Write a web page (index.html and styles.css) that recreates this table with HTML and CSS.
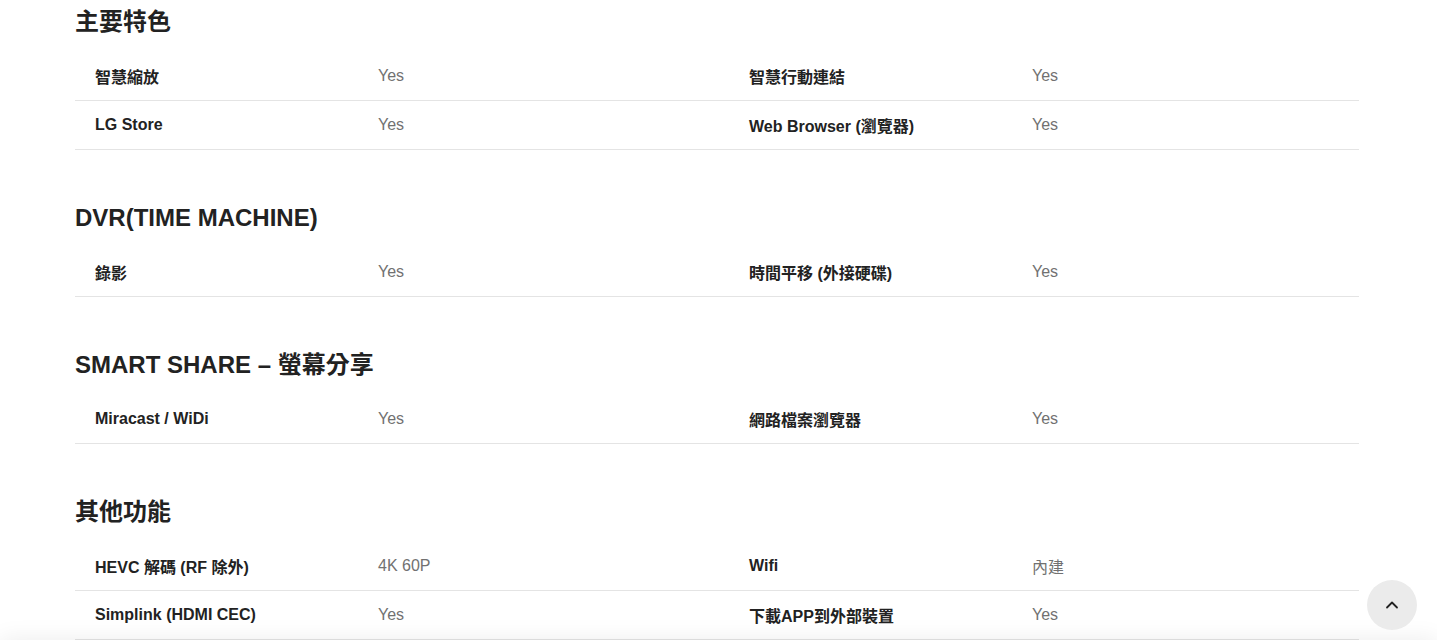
FILE: index.html
```html
<!DOCTYPE html>
<html lang="zh-Hant">
<head>
<meta charset="utf-8">
<title>規格</title>
<link rel="stylesheet" href="styles.css">
</head>
<body>
<main class="specs">
  <section class="spec-section">
    <h2 class="spec-title">主要特色</h2>
    <div class="spec-row">
      <div class="spec-label">智慧縮放</div><div class="spec-value">Yes</div>
      <div class="spec-label">智慧行動連結</div><div class="spec-value">Yes</div>
    </div>
    <div class="spec-row">
      <div class="spec-label">LG Store</div><div class="spec-value">Yes</div>
      <div class="spec-label">Web Browser (瀏覽器)</div><div class="spec-value">Yes</div>
    </div>
  </section>
  <section class="spec-section">
    <h2 class="spec-title">DVR(TIME MACHINE)</h2>
    <div class="spec-row">
      <div class="spec-label">錄影</div><div class="spec-value">Yes</div>
      <div class="spec-label">時間平移 (外接硬碟)</div><div class="spec-value">Yes</div>
    </div>
  </section>
  <section class="spec-section">
    <h2 class="spec-title">SMART SHARE – 螢幕分享</h2>
    <div class="spec-row">
      <div class="spec-label">Miracast / WiDi</div><div class="spec-value">Yes</div>
      <div class="spec-label">網路檔案瀏覽器</div><div class="spec-value">Yes</div>
    </div>
  </section>
  <section class="spec-section">
    <h2 class="spec-title">其他功能</h2>
    <div class="spec-row">
      <div class="spec-label">HEVC 解碼 (RF 除外)</div><div class="spec-value">4K 60P</div>
      <div class="spec-label">Wifi</div><div class="spec-value">內建</div>
    </div>
    <div class="spec-row">
      <div class="spec-label">Simplink (HDMI CEC)</div><div class="spec-value">Yes</div>
      <div class="spec-label">下載APP到外部裝置</div><div class="spec-value">Yes</div>
    </div>
  </section>
</main>
<div class="bottom-bar"></div>
<button class="to-top" aria-label="回到頂端">
  <svg width="16" height="16" viewBox="0 0 16 16" fill="none"><path d="M3 10.5 L8 5.5 L13 10.5" stroke="#222" stroke-width="1.8" stroke-linecap="round" stroke-linejoin="round"/></svg>
</button>
</body>
</html>
```

FILE: styles.css
```css
* { box-sizing: border-box; }
html, body { margin: 0; padding: 0; background: #fff; }
body {
  font-family: "Liberation Sans", Arial, "Noto Sans CJK TC", sans-serif;
  color: #222;
  overflow: hidden;
  height: 640px;
}
.specs {
  width: 1284px;
  margin-left: 75px;
  padding-top: 6px;
}
.spec-section + .spec-section { margin-top: 52px; }
.spec-title {
  margin: 0 0 14px;
  font-size: 24px;
  line-height: 32px;
  font-weight: 700;
  color: #222;
}
.spec-row {
  display: grid;
  grid-template-columns: 283px 371px 283px 1fr;
  align-items: center;
  height: 49px;
  padding-left: 20px;
  border-bottom: 1px solid #e4e4e4;
}
.spec-label {
  font-size: 16px;
  font-weight: 700;
  color: #222;
}
.spec-value {
  font-size: 16px;
  color: #717171;
}
.bottom-bar {
  position: fixed;
  left: 0;
  right: 0;
  bottom: -40px;
  height: 40px;
  background: #fff;
  box-shadow: 0 0 24px rgba(0,0,0,0.08);
}
.to-top {
  position: fixed;
  right: 20px;
  bottom: 10px;
  width: 50px;
  height: 50px;
  border-radius: 50%;
  border: 0;
  background: #ebebeb;
  display: flex;
  align-items: center;
  justify-content: center;
  padding: 0;
  cursor: pointer;
}
```
